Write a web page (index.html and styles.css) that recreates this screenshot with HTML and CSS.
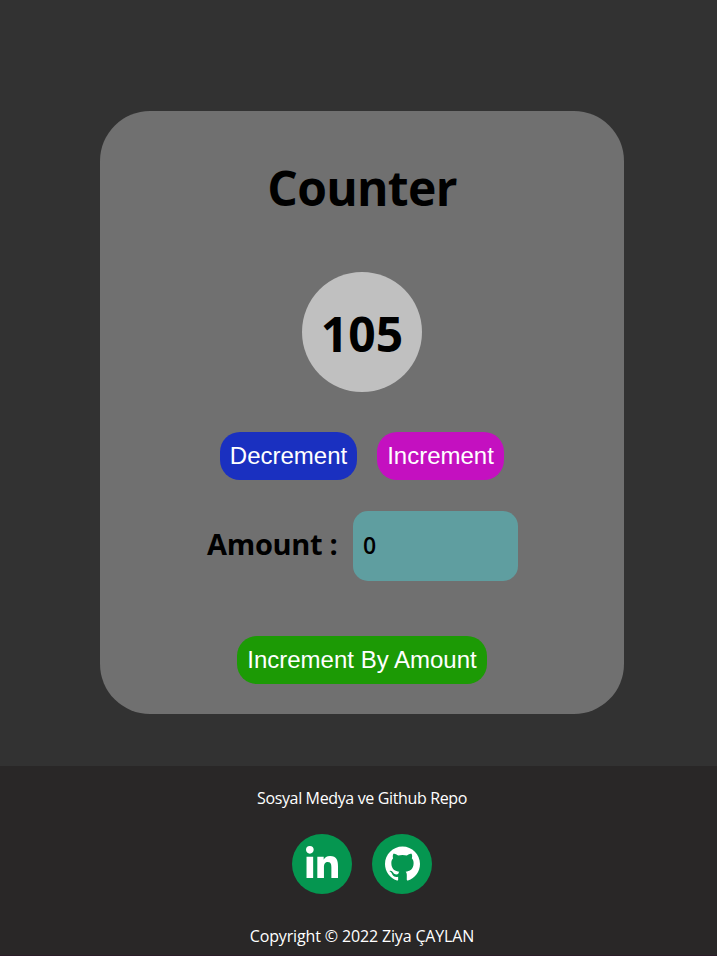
FILE: index.html
```html
<!DOCTYPE html>
<html lang="tr">
<head>
<meta charset="utf-8">
<title>Counter</title>
<link rel="stylesheet" href="styles.css">
</head>
<body>
<div class="page">
  <main class="main">
    <section class="card">
      <h1 class="title">Counter</h1>
      <div class="count">105</div>
      <div class="actions">
        <button class="btn btn-dec">Decrement</button>
        <button class="btn btn-inc">Increment</button>
      </div>
      <div class="amount">
        <label class="label" for="amount">Amount :</label>
        <input class="input" id="amount" type="text" value="0">
      </div>
      <button class="btn btn-add">Increment By Amount</button>
    </section>
  </main>
  <footer class="footer">
    <p class="social-title">Sosyal Medya ve Github Repo</p>
    <div class="social">
      <a class="icon" href="#"><svg class="linkedin" viewBox="0 0 448 448"><path d="M100.28 448H7.4V148.9h92.88zM53.79 108.1C24.09 108.1 0 83.5 0 53.8a53.79 53.79 0 0 1 107.58 0c0 29.7-24.1 54.3-53.79 54.3zM447.9 448h-92.68V302.4c0-34.7-.7-79.2-48.29-79.2-48.29 0-55.69 37.7-55.69 76.7V448h-92.78V148.9h89.08v40.8h1.3c12.4-23.5 42.69-48.3 87.88-48.3 94 0 111.28 61.9 111.28 142.3V448z"/></svg></a>
      <a class="icon" href="#"><svg class="github" viewBox="0 0 24 24"><path d="M12 .297c-6.63 0-12 5.373-12 12 0 5.303 3.438 9.8 8.205 11.385.6.113.82-.258.82-.577 0-.285-.01-1.04-.015-2.04-3.338.724-4.042-1.61-4.042-1.61C4.422 18.07 3.633 17.7 3.633 17.7c-1.087-.744.084-.729.084-.729 1.205.084 1.838 1.236 1.838 1.236 1.07 1.835 2.809 1.305 3.495.998.108-.776.417-1.305.76-1.605-2.665-.3-5.466-1.332-5.466-5.93 0-1.31.465-2.38 1.235-3.22-.135-.303-.54-1.523.105-3.176 0 0 1.005-.322 3.3 1.23.96-.267 1.98-.399 3-.405 1.02.006 2.04.138 3 .405 2.28-1.552 3.285-1.23 3.285-1.23.645 1.653.24 2.873.12 3.176.765.84 1.23 1.91 1.23 3.22 0 4.61-2.805 5.625-5.475 5.92.42.36.81 1.096.81 2.22 0 1.606-.015 2.896-.015 3.286 0 .315.21.69.825.57C20.565 22.092 24 17.592 24 12.297c0-6.627-5.373-12-12-12"/></svg></a>
    </div>
    <p class="copyright">Copyright © 2022 Ziya ÇAYLAN</p>
  </footer>
</div>
</body>
</html>
```
FILE: styles.css
```css
* { box-sizing: border-box; margin: 0; padding: 0; }
body { overflow: hidden; background: #323232; font-family: "Segoe UI", "Open Sans", "Noto Sans", sans-serif; }
.page { width: 724px; height: 956px; display: flex; flex-direction: column; }
.main { height: 766px; padding-top: 111px; }
.card { width: 524px; height: 603px; margin: 0 auto; border-radius: 50px; background: #707070; color: #000; display: flex; flex-direction: column; align-items: center; }
.title { height: 64px; margin-top: 45px; font-size: 48px; line-height: 64px; font-weight: 700; letter-spacing: -0.7px; white-space: nowrap; }
.count { width: 120px; height: 120px; margin-top: 52px; padding-top: 4px; border-radius: 50%; background: #c0c0c0; display: flex; align-items: center; justify-content: center; font-size: 48px; line-height: 64px; font-weight: 700; }
.actions { display: flex; gap: 20px; margin-top: 40px; }
.btn { height: 48px; border: 0; border-radius: 20px; color: #fff; font: 24px "Liberation Sans", Arial, sans-serif; white-space: nowrap; }
.btn-dec { width: 137px; background: #1a30c0; }
.btn-inc { width: 127px; background: #c410c0; }
.btn-add { width: 250px; margin-top: 55px; background: #1c9a05; }
.amount { display: flex; align-items: center; width: 312px; height: 70px; margin-top: 31px; }
.label { width: 147px; padding: 0 0 4px 1px; font-size: 29px; font-weight: 700; line-height: 38px; letter-spacing: -0.3px; white-space: nowrap; }
.input { width: 165px; height: 70px; padding: 0 10px 2px; border: 0; border-radius: 15px; background: #5f9ea0; color: #000; font-family: inherit; font-size: 23px; font-weight: 600; }
.footer { height: 190px; background: #292727; border-bottom: 1px solid #2b1c28; color: #fff; display: flex; flex-direction: column; align-items: center; font-size: 16px; line-height: 22px; white-space: nowrap; }
.social-title { margin-top: 21px; letter-spacing: -0.36px; }
.social { display: flex; gap: 20px; margin-top: 25px; }
.icon { width: 60px; height: 60px; border-radius: 50%; background: #059650; display: flex; align-items: center; justify-content: center; }
.icon svg { fill: #fff; }
.linkedin { width: 32px; height: 32px; margin-top: -4px; }
.github { width: 35px; height: 35px; margin-top: -1px; }
.copyright { margin-top: 31px; letter-spacing: -0.15px; }
```
